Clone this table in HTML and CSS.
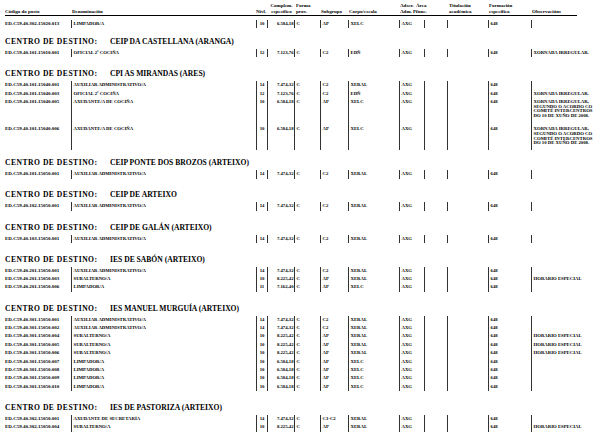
FILE: index.html
```html
<!DOCTYPE html>
<html lang="gl">
<head>
<meta charset="utf-8">
<title>Relación de postos</title>
<link rel="stylesheet" href="styles.css">
</head>
<body>
<div class="page">
  <div class="head">
    <div class="h"><span>Código do posto</span></div>
    <div class="h"><span>Denominación</span></div>
    <div class="h"><span>Nivl.</span></div>
    <div class="h hc"><span>Complem.</span><span>específico</span></div>
    <div class="h"><span>Forma</span><span>prov.</span></div>
    <div class="h"><span>Subgrupo</span></div>
    <div class="h"><span>Corpo/escala</span></div>
    <div class="h"><span>Adscr.</span><span>Adm. P.</span></div>
    <div class="h"><span>Área</span><span>func.</span></div>
    <div class="h"><span>Titulación</span><span>académica</span></div>
    <div class="h"><span>Formación</span><span>específica</span></div>
    <div class="h"><span>Observacións</span></div>
  </div>

  <div class="rows first">
    <div class="row"><div class="code">ED.C59.40.302.15020.013</div><div class="c">LIMPADOR/A</div><div class="c niv">10</div><div class="c cmp">6.584,18</div><div class="c">C</div><div class="c">AP</div><div class="c">XELC</div><div class="c">AXG</div><div class="c"></div><div class="c"></div><div class="c">648</div><div class="c"></div></div>
  </div>

  <section class="sec s1">
    <div class="title"><span class="lbl">CENTRO DE DESTINO:</span><span>CEIP DA CASTELLANA (ARANGA)</span></div>
    <div class="row"><div class="code">ED.C59.40.101.15010.001</div><div class="c">OFICIAL 2ª COCIÑA</div><div class="c niv">12</div><div class="c cmp">7.123,76</div><div class="c">C</div><div class="c">C2</div><div class="c">EDÑ</div><div class="c">AXG</div><div class="c"></div><div class="c"></div><div class="c">648</div><div class="c">XORNADA IRREGULAR.</div></div>
  </section>

  <section class="sec">
    <div class="title"><span class="lbl">CENTRO DE DESTINO:</span><span>CPI AS MIRANDAS (ARES)</span></div>
    <div class="row"><div class="code">ED.C59.40.101.15040.001</div><div class="c">AUXILIAR ADMINISTRATIVO/A</div><div class="c niv">14</div><div class="c cmp">7.474,32</div><div class="c">C</div><div class="c">C2</div><div class="c">XERAL</div><div class="c">AXG</div><div class="c"></div><div class="c"></div><div class="c">648</div><div class="c"></div></div>
    <div class="row"><div class="code">ED.C59.40.101.15040.003</div><div class="c">OFICIAL 2ª COCIÑA</div><div class="c niv">12</div><div class="c cmp">7.123,76</div><div class="c">C</div><div class="c">C2</div><div class="c">EDÑ</div><div class="c">AXG</div><div class="c"></div><div class="c"></div><div class="c">648</div><div class="c">XORNADA IRREGULAR.</div></div>
    <div class="row tall"><div class="code">ED.C59.40.101.15040.005</div><div class="c">AXUDANTE/A DE COCIÑA</div><div class="c niv">10</div><div class="c cmp">6.584,18</div><div class="c">C</div><div class="c">AP</div><div class="c">XELC</div><div class="c">AXG</div><div class="c"></div><div class="c"></div><div class="c">648</div><div class="c multi">XORNADA IRREGULAR,<br>SEGUNDO O ACORDO CO<br>COMITÉ INTERCENTROS<br>DO 10 DE XUÑO DE 2008.</div></div>
    <div class="row tall last"><div class="code">ED.C59.40.101.15040.006</div><div class="c">AXUDANTE/A DE COCIÑA</div><div class="c niv">10</div><div class="c cmp">6.584,18</div><div class="c">C</div><div class="c">AP</div><div class="c">XELC</div><div class="c">AXG</div><div class="c"></div><div class="c"></div><div class="c">648</div><div class="c multi">XORNADA IRREGULAR,<br>SEGUNDO O ACORDO CO<br>COMITÉ INTERCENTROS<br>DO 10 DE XUÑO DE 2008.</div></div>
  </section>

  <section class="sec tight">
    <div class="title"><span class="lbl">CENTRO DE DESTINO:</span><span>CEIP PONTE DOS BROZOS (ARTEIXO)</span></div>
    <div class="row"><div class="code">ED.C59.40.101.15050.001</div><div class="c">AUXILIAR ADMINISTRATIVO/A</div><div class="c niv">14</div><div class="c cmp">7.474,32</div><div class="c">C</div><div class="c">C2</div><div class="c">XERAL</div><div class="c">AXG</div><div class="c"></div><div class="c"></div><div class="c">648</div><div class="c"></div></div>
  </section>

  <section class="sec">
    <div class="title"><span class="lbl">CENTRO DE DESTINO:</span><span>CEIP DE ARTEIXO</span></div>
    <div class="row"><div class="code">ED.C59.40.102.15050.001</div><div class="c">AUXILIAR ADMINISTRATIVO/A</div><div class="c niv">14</div><div class="c cmp">7.474,32</div><div class="c">C</div><div class="c">C2</div><div class="c">XERAL</div><div class="c">AXG</div><div class="c"></div><div class="c"></div><div class="c">648</div><div class="c"></div></div>
  </section>

  <section class="sec">
    <div class="title"><span class="lbl">CENTRO DE DESTINO:</span><span>CEIP DE GALÁN (ARTEIXO)</span></div>
    <div class="row"><div class="code">ED.C59.40.103.15050.001</div><div class="c">AUXILIAR ADMINISTRATIVO/A</div><div class="c niv">14</div><div class="c cmp">7.474,32</div><div class="c">C</div><div class="c">C2</div><div class="c">XERAL</div><div class="c">AXG</div><div class="c"></div><div class="c"></div><div class="c">648</div><div class="c"></div></div>
  </section>

  <section class="sec">
    <div class="title"><span class="lbl">CENTRO DE DESTINO:</span><span>IES DE SABÓN (ARTEIXO)</span></div>
    <div class="row"><div class="code">ED.C59.40.201.15050.001</div><div class="c">AUXILIAR ADMINISTRATIVO/A</div><div class="c niv">14</div><div class="c cmp">7.474,32</div><div class="c">C</div><div class="c">C2</div><div class="c">XERAL</div><div class="c">AXG</div><div class="c"></div><div class="c"></div><div class="c">648</div><div class="c"></div></div>
    <div class="row"><div class="code">ED.C59.40.201.15050.003</div><div class="c">SUBALTERNO/A</div><div class="c niv">10</div><div class="c cmp">8.225,42</div><div class="c">C</div><div class="c">AP</div><div class="c">XERAL</div><div class="c">AXG</div><div class="c"></div><div class="c"></div><div class="c">648</div><div class="c">HORARIO ESPECIAL</div></div>
    <div class="row"><div class="code">ED.C59.40.201.15050.006</div><div class="c">LIMPADOR/A</div><div class="c niv">11</div><div class="c cmp">7.162,40</div><div class="c">C</div><div class="c">AP</div><div class="c">XELC</div><div class="c">AXG</div><div class="c"></div><div class="c"></div><div class="c">648</div><div class="c"></div></div>
  </section>

  <section class="sec">
    <div class="title"><span class="lbl">CENTRO DE DESTINO:</span><span>IES MANUEL MURGUÍA (ARTEIXO)</span></div>
    <div class="row"><div class="code">ED.C59.40.301.15050.001</div><div class="c">AUXILIAR ADMINISTRATIVO/A</div><div class="c niv">14</div><div class="c cmp">7.474,32</div><div class="c">C</div><div class="c">C2</div><div class="c">XERAL</div><div class="c">AXG</div><div class="c"></div><div class="c"></div><div class="c">648</div><div class="c"></div></div>
    <div class="row"><div class="code">ED.C59.40.301.15050.002</div><div class="c">AUXILIAR ADMINISTRATIVO/A</div><div class="c niv">14</div><div class="c cmp">7.474,32</div><div class="c">C</div><div class="c">C2</div><div class="c">XERAL</div><div class="c">AXG</div><div class="c"></div><div class="c"></div><div class="c">648</div><div class="c"></div></div>
    <div class="row"><div class="code">ED.C59.40.301.15050.004</div><div class="c">SUBALTERNO/A</div><div class="c niv">10</div><div class="c cmp">8.225,42</div><div class="c">C</div><div class="c">AP</div><div class="c">XERAL</div><div class="c">AXG</div><div class="c"></div><div class="c"></div><div class="c">648</div><div class="c">HORARIO ESPECIAL</div></div>
    <div class="row"><div class="code">ED.C59.40.301.15050.005</div><div class="c">SUBALTERNO/A</div><div class="c niv">10</div><div class="c cmp">8.225,42</div><div class="c">C</div><div class="c">AP</div><div class="c">XERAL</div><div class="c">AXG</div><div class="c"></div><div class="c"></div><div class="c">648</div><div class="c">HORARIO ESPECIAL</div></div>
    <div class="row"><div class="code">ED.C59.40.301.15050.006</div><div class="c">SUBALTERNO/A</div><div class="c niv">10</div><div class="c cmp">8.225,42</div><div class="c">C</div><div class="c">AP</div><div class="c">XERAL</div><div class="c">AXG</div><div class="c"></div><div class="c"></div><div class="c">648</div><div class="c">HORARIO ESPECIAL</div></div>
    <div class="row"><div class="code">ED.C59.40.301.15050.007</div><div class="c">LIMPADOR/A</div><div class="c niv">10</div><div class="c cmp">6.584,18</div><div class="c">C</div><div class="c">AP</div><div class="c">XELC</div><div class="c">AXG</div><div class="c"></div><div class="c"></div><div class="c">648</div><div class="c"></div></div>
    <div class="row"><div class="code">ED.C59.40.301.15050.008</div><div class="c">LIMPADOR/A</div><div class="c niv">10</div><div class="c cmp">6.584,18</div><div class="c">C</div><div class="c">AP</div><div class="c">XELC</div><div class="c">AXG</div><div class="c"></div><div class="c"></div><div class="c">648</div><div class="c"></div></div>
    <div class="row"><div class="code">ED.C59.40.301.15050.009</div><div class="c">LIMPADOR/A</div><div class="c niv">10</div><div class="c cmp">6.584,18</div><div class="c">C</div><div class="c">AP</div><div class="c">XELC</div><div class="c">AXG</div><div class="c"></div><div class="c"></div><div class="c">648</div><div class="c"></div></div>
    <div class="row"><div class="code">ED.C59.40.301.15050.010</div><div class="c">LIMPADOR/A</div><div class="c niv">10</div><div class="c cmp">6.584,18</div><div class="c">C</div><div class="c">AP</div><div class="c">XELC</div><div class="c">AXG</div><div class="c"></div><div class="c"></div><div class="c">648</div><div class="c"></div></div>
  </section>

  <section class="sec">
    <div class="title"><span class="lbl">CENTRO DE DESTINO:</span><span>IES DE PASTORIZA (ARTEIXO)</span></div>
    <div class="row"><div class="code">ED.C59.40.302.15050.001</div><div class="c">AXUDANTE DE SECRETARÍA</div><div class="c niv">14</div><div class="c cmp">7.474,32</div><div class="c">C</div><div class="c">C1-C2</div><div class="c">XERAL</div><div class="c">AXG</div><div class="c"></div><div class="c"></div><div class="c">648</div><div class="c"></div></div>
    <div class="row"><div class="code">ED.C59.40.302.15050.004</div><div class="c">SUBALTERNO/A</div><div class="c niv">10</div><div class="c cmp">8.225,42</div><div class="c">C</div><div class="c">AP</div><div class="c">XERAL</div><div class="c">AXG</div><div class="c"></div><div class="c"></div><div class="c">648</div><div class="c">HORARIO ESPECIAL</div></div>
  </section>
</div>
</body>
</html>
```
FILE: styles.css
```css
html, body {
  margin: 0;
  padding: 0;
  background: #fff;
}
body {
  font-family: "Liberation Serif", "Times New Roman", serif;
  font-weight: bold;
  color: #000;
  overflow: hidden;
}
.page {
  padding-left: 5px;
}
.head {
  display: grid;
  grid-template-columns: 67px 184px 11px 29px 25px 28px 51px 16px 33px 40px 43px 45px;
  width: 572px;
  padding-top: 3px;
  height: 12px;
  border-bottom: 1px solid #000;
  font-size: 5px;
  line-height: 6px;
}
.h {
  display: flex;
  flex-direction: column;
  justify-content: flex-end;
  white-space: nowrap;
}
.hc {
  align-items: center;
}
.rows.first {
  margin-top: 4px;
}
.row {
  display: grid;
  grid-template-columns: 66px 185px 11px 27px 26px 28px 51px 25px 23px 41px 43px 54px;
  height: 8.4px;
  font-size: 4.75px;
  line-height: 8.4px;
}
.row.tall {
  height: 27.4px;
}
.row.tall.last {
  height: 25px;
}
.code {
  font-size: 5px;
  white-space: nowrap;
}
.c {
  border-left: 1px solid #333;
  padding-left: 1.5px;
  white-space: nowrap;
}
.niv {
  text-align: center;
  padding-left: 0;
}
.cmp {
  text-align: right;
  padding-left: 0;
  padding-right: 0.5px;
}
.multi {
  line-height: 4.7px;
  padding-top: 1.85px;
}
.sec {
  margin-top: 11.8px;
}
.sec.s1 {
  margin-top: 8.6px;
}
.sec.tight {
  margin-top: 7.8px;
}
.title {
  display: flex;
  height: 10px;
  line-height: 10px;
  font-size: 7.6px;
  margin-bottom: 2px;
  white-space: nowrap;
}
.title .lbl {
  width: 105px;
  letter-spacing: 0.5px;
}
```
